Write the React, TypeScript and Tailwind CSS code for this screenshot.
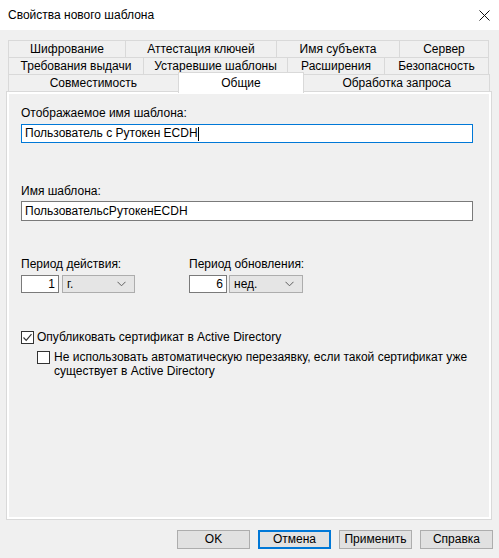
import React from 'react';

const tabRows = [
  [
    { label: 'Шифрование', w: 118 },
    { label: 'Аттестация ключей', w: 152 },
    { label: 'Имя субъекта', w: 124 },
    { label: 'Сервер', w: 90 },
  ],
  [
    { label: 'Требования выдачи', w: 136 },
    { label: 'Устаревшие шаблоны', w: 145 },
    { label: 'Расширения', w: 98 },
    { label: 'Безопасность', w: 105 },
  ],
];

function Chevron() {
  return (
    <svg width="9" height="6" viewBox="0 0 9 6" className="shrink-0">
      <path d="M0.5 0.8 L4.5 4.8 L8.5 0.8" fill="none" stroke="#5e5e5e" strokeWidth="1" />
    </svg>
  );
}

function Combo({ value, w }: { value: string; w: string }) {
  return (
    <div className={`${w} h-[18px] border border-[#adadad] bg-[#e5e5e5] flex items-center justify-between pl-[4px] pr-[8px]`}>
      <span>{value}</span>
      <Chevron />
    </div>
  );
}

function Checkbox({ checked }: { checked?: boolean }) {
  return (
    <div className="w-[13px] h-[13px] border border-[#333333] bg-white flex items-center justify-center shrink-0">
      {checked && (
        <svg width="11" height="11" viewBox="0 0 11 11">
          <path d="M1.5 5.5 L4.2 8.3 L9.5 2.2" fill="none" stroke="#333333" strokeWidth="1.2" />
        </svg>
      )}
    </div>
  );
}

export default function App() {
  return (
    <div className="w-[499px] h-[558px] bg-[#f0f0f0] flex flex-col text-[12px] leading-[15px] text-black font-['Liberation_Sans',Arial,sans-serif] overflow-hidden">
      {/* Title bar */}
      <div className="h-[30px] bg-white flex items-center justify-between pl-[8px] pr-[9px] shrink-0">
        <span className="text-[12px]">Свойства нового шаблона</span>
        <svg width="11" height="11" viewBox="0 0 11 11">
          <path d="M0.5 0.5 L10.5 10.5 M10.5 0.5 L0.5 10.5" stroke="#111" strokeWidth="1" />
        </svg>
      </div>

      {/* Tabs */}
      <div className="mt-[10px] ml-[8px] w-[482px] flex flex-col">
        {tabRows.map((row, i) => (
          <div key={i} className="flex h-[18px] -mt-px first:mt-0">
            {row.map((t, j) => (
              <div
                key={t.label}
                style={{ width: t.w }}
                className={`h-[18px] border border-[#d9d9d9] bg-[#f0f0f0] flex items-center justify-center ${j > 0 ? '-ml-px' : ''}`}
              >
                {t.label}
              </div>
            ))}
          </div>
        ))}
        <div className="flex h-[18px] -mt-px">
          <div className="w-[171px] h-[18px] border border-[#d9d9d9] flex items-center justify-center">Совместимость</div>
          <div className="relative z-10 w-[127px] h-[21px] -mt-[2px] -ml-px bg-white border border-b-0 border-[#d9d9d9] flex items-start justify-center pt-[3px]">
            Общие
          </div>
          <div className="w-[187px] h-[18px] -ml-px border border-[#d9d9d9] flex items-center justify-center">Обработка запроса</div>
        </div>
      </div>

      {/* Panel */}
      <div className="ml-[6px] w-[486px] h-[429px] -mt-px border border-[#d9d9d9] bg-white p-[2px] shrink-0">
        <div className="h-full bg-[#f0f0f0] pl-[12px] pt-[12px] flex flex-col">
          <div>Отображаемое имя шаблона:</div>
          <div className="mt-[3px] w-[452px] h-[19px] border border-[#0078d7] bg-white flex items-center pl-[3px]">
            <span>Пользователь с Рутокен ECDH</span>
            <span className="w-px h-[14px] bg-black" />
          </div>

          <div className="mt-[41px]">Имя шаблона:</div>
          <div className="mt-[2px] w-[452px] h-[20px] border border-[#7a7a7a] bg-white flex items-center pl-[3px]">
            ПользовательсРутокенECDH
          </div>

          <div className="mt-[36px] flex">
            <div className="flex flex-col w-[168px]">
              <div>Период действия:</div>
              <div className="mt-[3px] flex gap-[3px]">
                <div className="w-[38px] h-[18px] border border-[#7a7a7a] bg-white flex items-center justify-end pr-[3px]">1</div>
                <Combo value="г." w="w-[73px]" />
              </div>
            </div>
            <div className="flex flex-col">
              <div>Период обновления:</div>
              <div className="mt-[3px] flex gap-[2px]">
                <div className="w-[38px] h-[18px] border border-[#7a7a7a] bg-white flex items-center justify-end pr-[3px]">6</div>
                <Combo value="нед." w="w-[74px]" />
              </div>
            </div>
          </div>

          <div className="mt-[37px] flex items-center gap-[3px]">
            <Checkbox checked />
            <span>Опубликовать сертификат в Active Directory</span>
          </div>
          <div className="mt-[5px] ml-[16px] flex items-start gap-[4px]">
            <div className="mt-[1px]">
              <Checkbox />
            </div>
            <span className="w-[420px] leading-[14px]">
              Не использовать автоматическую перезаявку, если такой сертификат уже существует в Active Directory
            </span>
          </div>
        </div>
      </div>

      {/* Buttons */}
      <div className="mt-[10px] flex justify-end gap-[8px] pr-[6px]">
        <button className="w-[73px] h-[19px] border border-[#adadad] bg-[#e1e1e1] flex items-center justify-center">OK</button>
        <button className="w-[73px] h-[19px] border-2 border-[#0078d7] bg-[#e1e1e1] flex items-center justify-center">Отмена</button>
        <button className="w-[73px] h-[19px] border border-[#adadad] bg-[#e1e1e1] flex items-center justify-center">Применить</button>
        <button className="w-[73px] h-[19px] border border-[#adadad] bg-[#e1e1e1] flex items-center justify-center">Справка</button>
      </div>
    </div>
  );
}
